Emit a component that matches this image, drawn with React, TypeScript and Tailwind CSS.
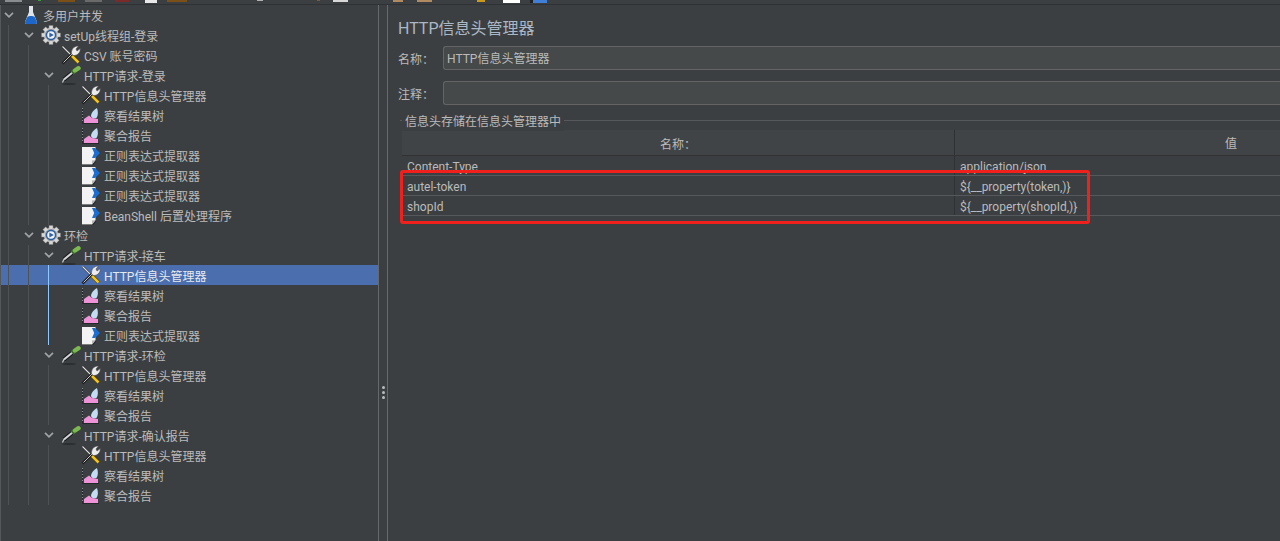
import React from "react";

const Wrench = () => (
  <svg width="20" height="20" viewBox="0 0 20 20" className="shrink-0">
    <path d="M1.5 1.5 L10 10" stroke="#2a2a2a" strokeWidth="2.2" />
    <path d="M1.5 1.5 L10 10" stroke="#e0e0e0" strokeWidth="1.1" />
    <path d="M10.5 10.5 L17.5 17.5" stroke="#3a3208" strokeWidth="3.6" />
    <path d="M10.5 10.5 L17.5 17.5" stroke="#f4c415" strokeWidth="2.5" />
    <path d="M1.5 18.5 L11.5 8.5" stroke="#1f1f1f" strokeWidth="2.6" />
    <path d="M2.5 17.5 L11.5 8.5" stroke="#c4c4c4" strokeWidth="1" />
    <path d="M10.5 9 C10 5 12.5 0.8 17.5 1 L15 4 L16 6 L19.2 3.6 C19.8 7.5 16 11 12.5 10.5 Z" fill="#ececec" stroke="#4a4a4a" strokeWidth="0.6" />
  </svg>
);

const Dropper = () => (
  <svg width="20" height="20" viewBox="0 0 20 20" className="shrink-0">
    <ellipse cx="8" cy="19" rx="7" ry="0.9" fill="#2b2d2f" />
    <path d="M1.5 17.5 L3 14" stroke="#c9cdd0" strokeWidth="1.2" />
    <path d="M3 14.5 L11.5 7.5" stroke="#161616" strokeWidth="4.2" />
    <path d="M3 14.5 L11.5 7.5" stroke="#d2d5d7" strokeWidth="2.2" />
    <path d="M11 8 L14 5.5" stroke="#3d6b2c" strokeWidth="4.6" />
    <path d="M14 5.5 L17.5 3.2" stroke="#7cb951" strokeWidth="4.4" strokeLinecap="round" />
  </svg>
);

const Gear = () => (
  <svg width="20" height="20" viewBox="0 0 20 20" className="shrink-0">
    <g fill="#d7d7d7" stroke="#7a7a7a" strokeWidth="0.4">
      <circle cx="10" cy="10" r="7.4" />
      <rect x="8" y="0.5" width="4" height="4" />
      <rect x="8" y="15.5" width="4" height="4" />
      <rect x="0.5" y="8" width="4" height="4" />
      <rect x="15.5" y="8" width="4" height="4" />
      <rect x="8" y="0.5" width="4" height="4" transform="rotate(45 10 10)" />
      <rect x="8" y="15.5" width="4" height="4" transform="rotate(45 10 10)" />
      <rect x="0.5" y="8" width="4" height="4" transform="rotate(45 10 10)" />
      <rect x="15.5" y="8" width="4" height="4" transform="rotate(45 10 10)" />
    </g>
    <circle cx="10" cy="10" r="5.4" fill="#2f5f9e" />
    <circle cx="10" cy="10" r="3.8" fill="#eef2f7" />
    <path d="M8.4 7.6 L12.8 10 L8.4 12.4 Z" fill="#2e5fa8" />
  </svg>
);

const Flask = () => (
  <svg width="14" height="20" viewBox="0 0 14 20" className="shrink-0">
    <path d="M5 1 L9 1 L9 7 L12.8 16.5 C13.3 18 12.6 19 11.5 19 L2.5 19 C1.4 19 0.7 18 1.2 16.5 L5 7 Z" fill="#dfe5ea" />
    <path d="M3.4 12 C5 10.8 9 10.8 10.6 12 L12.8 16.5 C13.3 18 12.6 19 11.5 19 L2.5 19 C1.4 19 0.7 18 1.2 16.5 Z" fill="#1c67c9" />
  </svg>
);

const Chart = () => (
  <svg width="20" height="20" viewBox="0 0 20 20" className="shrink-0">
    <path d="M1.5 3 V18.5 H18" fill="none" stroke="#25282a" strokeWidth="1" />
    <path d="M1.5 3 V18" fill="none" stroke="#8a8d8f" strokeWidth="1" strokeDasharray="1 2" />
    <path d="M3 18 V14 L8 10.5 L11 13 L17 14 V18 Z" fill="#ee93d8" />
    <path d="M10 11 C10 8 13 4.5 16 3 C17.2 6 17.2 10.5 15.8 12.5 C14 14 10.5 13.5 10 11 Z" fill="#c3dcf3" />
  </svg>
);

const Doc = () => (
  <svg width="20" height="20" viewBox="0 0 20 20" className="shrink-0">
    <path d="M1 2 H14.5 V15 L11 19.5 H1 Z" fill="#f3f3f3" />
    <path d="M11 19.5 L14.5 15 L11 15.5 Z" fill="#b5b5b5" />
    <path d="M11.5 19.5 L15 15.5 V16.5 L12.5 19.8 H1 V19.5 Z" fill="#26282a" />
    <path d="M11 3 H14 L19 8 L14 13 H11 L13.2 8 Z" fill="#1a6fd4" />
  </svg>
);

const Chevron = () => (
  <svg width="10" height="6" viewBox="0 0 10 6" className="shrink-0">
    <path d="M1 0.8 L5 4.8 L9 0.8" fill="none" stroke="#a0a4a7" strokeWidth="1.7" />
  </svg>
);

type Kind = "wrench" | "dropper" | "gear" | "flask" | "chart" | "doc";

const iconOf: Record<Kind, React.ReactNode> = {
  wrench: <Wrench />,
  dropper: <Dropper />,
  gear: <Gear />,
  flask: <Flask />,
  chart: <Chart />,
  doc: <Doc />,
};

const Row = ({
  kind,
  label,
  open,
  selected,
  tight,
}: {
  kind: Kind;
  label: string;
  open?: boolean;
  selected?: boolean;
  tight?: boolean;
}) => (
  <div className="relative flex h-5 items-center">
    {selected && <div className="absolute left-[-60px] right-[-300px] top-0 -z-10 h-5 bg-[#4b6eaf]" />}
    <div className="flex h-5 w-[20px] shrink-0 items-center pl-[3px]">{open && <Chevron />}</div>
    <div className="flex h-5 w-[20px] shrink-0 items-center justify-center">{iconOf[kind]}</div>
    <span
      className={`whitespace-nowrap pt-[4px] ${tight ? "ml-[2px]" : "ml-[3px]"} ${
        selected ? "text-[#e6e9ec]" : "text-[#bbbbbb]"
      }`}
    >
      {label}
    </span>
  </div>
);

const Leafs = ({ children, guide = "border-[#4e5254]" }: { children: React.ReactNode; guide?: string }) => (
  <div className={`ml-[7px] border-l pl-[12px] ${guide}`}>{children}</div>
);

const Request = ({
  label,
  guide,
  extra,
  selected,
}: {
  label: string;
  guide?: string;
  extra?: string[];
  selected?: boolean;
}) => (
  <>
    <Row kind="dropper" label={label} open />
    <Leafs guide={guide}>
      <Row kind="wrench" label="HTTP信息头管理器" selected={selected} />
      <Row kind="chart" label="察看结果树" />
      <Row kind="chart" label="聚合报告" />
      {extra?.map((t, i) => <Row key={i} kind="doc" label={t} />)}
    </Leafs>
  </>
);

const TableRow = ({ name, value }: { name: string; value: string }) => (
  <div className="flex h-5 border-b border-[#55595b] text-[#bbbbbb]">
    <div className="w-[552px] pl-[5px] pt-[2px] leading-[18px] whitespace-nowrap">{name}</div>
    <div className="flex-1 border-l border-[#2f3234] pl-[5px] pt-[2px] leading-[18px] whitespace-nowrap">{value}</div>
  </div>
);

export default function App() {
  return (
    <div
      className="flex h-[541px] w-[1280px] flex-col overflow-hidden bg-[#3c3f41] text-[12px]"
      style={{ fontFamily: 'Roboto, "Noto Sans CJK SC", sans-serif' }}
    >
      {/* toolbar remnant */}
      <div className="flex h-[5px] shrink-0 items-start border-b border-[#2f3234] bg-[#3c3f41]">
        <div className="ml-[5px] h-[2px] w-[17px] bg-[#8a8d8f]" />
        <div className="ml-[16px] h-[1px] w-[3px] bg-[#3f9a3f]" />
        <div className="ml-[17px] h-[2px] w-[17px] bg-[#7a5016]" />
        <div className="ml-[10px] h-[2px] w-[17px] bg-[#6a6a6a]" />
        <div className="ml-[13px] h-[2px] w-[14px] bg-[#7b2a2a]" />
        <div className="ml-[16px] h-[3px] w-[12px] bg-[#e8e8e8]" />
        <div className="ml-[10px] h-[2px] w-[20px] bg-[#7a5016]" />
        <div className="ml-[70px] h-[1px] w-[6px] bg-[#b0b0b0]" />
        <div className="ml-[54px] h-[1px] w-[3px] bg-[#7a5a40]" />
        <div className="ml-[13px] h-[2px] w-[15px] bg-[#d8d8d8]" />
        <div className="ml-[45px] h-[2px] w-[10px] bg-[#b08a60]" />
        <div className="ml-[14px] h-[2px] w-[15px] bg-[#b08a60]" />
        <div className="ml-[45px] h-[2px] w-[8px] bg-[#c89a18]" />
        <div className="ml-[18px] h-[3px] w-[17px] bg-[#ffffff]" />
        <div className="ml-[10px] h-[3px] w-[3px] bg-[#222222]" />
        <div className="h-[3px] w-[14px] bg-[#3f7fd8]" />
      </div>

      <div className="flex min-h-0 flex-1">
        {/* tree */}
        <div className="isolate w-[379px] shrink-0 overflow-hidden border-x border-l-[#55585a] border-r-[#66696b]">
          <Row kind="flask" label="多用户并发" open tight />
          <Leafs>
            <Row kind="gear" label="setUp线程组-登录" open />
            <Leafs>
              <Row kind="wrench" label="CSV 账号密码" />
              <Request
                label="HTTP请求-登录"
                extra={["正则表达式提取器", "正则表达式提取器", "正则表达式提取器", "BeanShell 后置处理程序"]}
              />
            </Leafs>
            <Row kind="gear" label="环检" open />
            <Leafs>
              <Request label="HTTP请求-接车" guide="border-[#8fc7ff]" extra={["正则表达式提取器"]} selected />
              <Request label="HTTP请求-环检" />
              <Request label="HTTP请求-确认报告" />
            </Leafs>
          </Leafs>
        </div>

        {/* splitter */}
        <div className="flex w-[9px] shrink-0 justify-center border-r border-[#66696b]">
          <div className="mt-[381px] flex flex-col gap-[2px] self-start">
            <div className="h-[3px] w-[3px] rounded-full bg-[#bbbbbb]" />
            <div className="h-[3px] w-[3px] rounded-full bg-[#bbbbbb]" />
            <div className="h-[3px] w-[3px] rounded-full bg-[#bbbbbb]" />
          </div>
        </div>

        {/* editor */}
        <div className="min-w-0 flex-1 pl-[10px]">
          <div className="mt-[11px] h-[24px] pt-px text-[16px] leading-[24px] text-[#a9b7c6]">HTTP信息头管理器</div>
          <div className="mt-[6px] flex h-[24px] items-center">
            <span className="w-[45px] pt-[4px] text-[#bbbbbb]">名称：</span>
            <div className="h-[24px] flex-1 rounded-l-[3px] border border-r-0 border-[#646464] bg-[#45494a] pl-[3px] pt-px leading-[23px] text-[#bbbbbb]">
              HTTP信息头管理器
            </div>
          </div>
          <div className="mt-[11px] flex h-[24px] items-center">
            <span className="w-[45px] pt-[4px] text-[#bbbbbb]">注释：</span>
            <div className="h-[24px] flex-1 rounded-l-[3px] border border-r-0 border-[#646464] bg-[#45494a]" />
          </div>

          <div className="relative ml-[2px] mt-[15px] border-t border-[#55595b] pl-[2px] pt-[9px]">
            <span className="absolute left-[2px] top-[-8px] bg-[#3c3f41] px-[3px] leading-[18px] text-[#bbbbbb]">
              信息头存储在信息头管理器中
            </span>
            <div className="flex h-[26px] border-b border-[#323232] bg-[#414446] text-[#bbbbbb]">
              <div className="w-[552px] pt-[3px] text-center leading-[25px]">名称：</div>
              <div className="flex-1 border-l border-[#2f3234] pl-[270px] pt-[2px] leading-[25px] whitespace-nowrap">值</div>
            </div>
            <TableRow name="Content-Type" value="application/json" />
            <TableRow name="autel-token" value="${__property(token,)}" />
            <TableRow name="shopId" value="${__property(shopId,)}" />
            <div className="absolute left-0 top-[49px] h-[54px] w-[690px] rounded-[3px] border-[3px] border-[#f0211c]" />
          </div>
        </div>
      </div>
    </div>
  );
}
